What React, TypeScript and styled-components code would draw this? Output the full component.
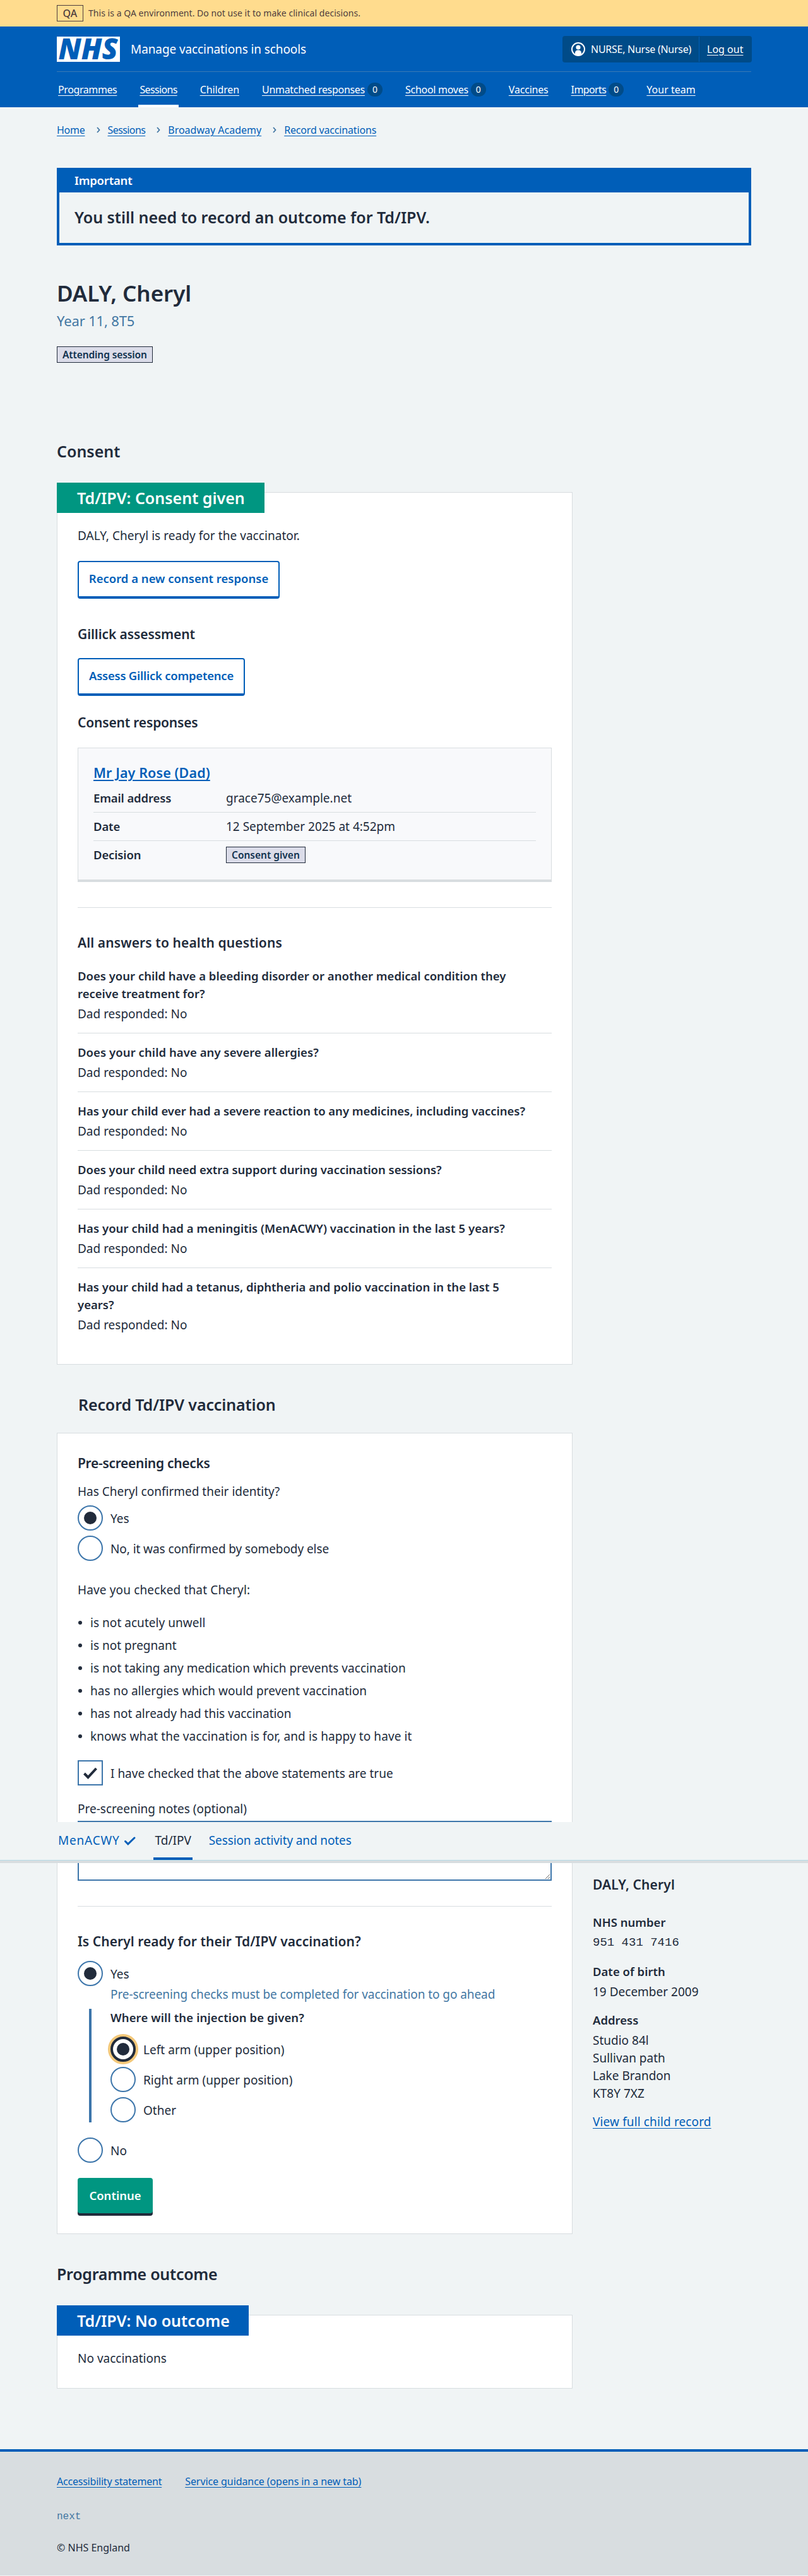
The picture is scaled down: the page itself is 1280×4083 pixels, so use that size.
import React from "react";
import styled, { createGlobalStyle, css } from "styled-components";

const c = {
  text: "#212b3b",
  blue: "#005eb8",
  darkBlue: "#004b88",
  secondary: "#4277a3",
  input: "#3d76ab",
  border: "#d8dde0",
  page: "#f0f4f5",
  green: "#009681",
  focus: "#f3c87a",
};

const GlobalStyle = createGlobalStyle`
  *, *::before, *::after { box-sizing: border-box; }
  body {
    margin: 0;
    background: ${c.page};
    color: ${c.text};
    font: 400 19px/28px "Noto Sans", "Open Sans", sans-serif;
  }
  h1, h2, h3, h4, p, ul, dl, dd, dt { margin: 0; padding: 0; }
  ul { list-style: none; }
`;

const spacing = css<{ $ls?: number }>`
  letter-spacing: ${(p) => p.$ls ?? 0}px;
`;

const Page = styled.div`
  position: relative;
`;
const Container = styled.div`
  width: 1100px;
  margin: 0 auto;
`;

/* Environment banner */
const Environment = styled.div`
  background: #ffdc8e;
  color: #4d3d3d;
  height: 42px;
`;
const EnvironmentInner = styled(Container)`
  display: flex;
  align-items: center;
  gap: 8px;
  height: 42px;
  font-size: 14px;
  line-height: 20px;
  letter-spacing: 0.04px;
`;
const EnvironmentTag = styled.strong`
  display: flex;
  align-items: center;
  justify-content: center;
  width: 42px;
  height: 26px;
  border: 1px solid #4d3d3d;
  font-size: 16px;
  font-weight: 500;
`;

/* Header */
const Header = styled.header`
  background: ${c.blue};
  color: #fff;
`;
const HeaderTop = styled.div`
  display: flex;
  align-items: center;
  height: 72px;
  border-bottom: 1px solid #3a7ab4;
`;
const LogoBox = styled.svg`
  display: block;
  width: 100px;
  height: 40px;
  overflow: visible;
`;
const ServiceName = styled.span`
  margin-left: 17px;
  letter-spacing: -0.1px;
`;
const Account = styled.div`
  display: flex;
  align-items: center;
  height: 42px;
  margin: 0 -1px 0 auto;
  background: ${c.darkBlue};
  border-radius: 4px;
  font-size: 16px;
  line-height: 24px;
`;
const AccountUser = styled.div`
  display: flex;
  align-items: center;
  gap: 9px;
  height: 40px;
  width: 217px;
  padding-left: 14px;
  letter-spacing: -0.27px;
  border-right: 1px solid ${c.blue};
`;
const LogOut = styled.a`
  width: 83px;
  padding-left: 12px;
  text-decoration: underline;
  text-underline-offset: 3px;
`;
const Nav = styled.nav`
  display: flex;
  gap: 32px;
  height: 56px;
`;
const NavItem = styled.a<{ $current?: boolean; $ls?: number }>`
  display: flex;
  align-items: center;
  gap: 4px;
  height: 56px;
  padding: 4px 2px 0;
  font-size: 16px;
  line-height: 24px;
  border-bottom: 4px solid ${(p) => (p.$current ? "#fff" : "transparent")};
  ${spacing}
`;
const NavText = styled.span`
  text-decoration: underline;
  text-underline-offset: 3px;
`;
const Count = styled.span`
  width: 24px;
  height: 22px;
  border-radius: 12px;
  background: ${c.darkBlue};
  font-size: 14px;
  line-height: 22px;
  text-align: center;
  letter-spacing: 0;
`;

const Breadcrumb = styled.nav`
  display: flex;
  align-items: center;
  padding-top: 24px;
  font-size: 16px;
  line-height: 24px;
`;
const Crumb = styled.a<{ $ls?: number }>`
  color: ${c.blue};
  text-decoration: underline;
  text-underline-offset: 3px;
  ${spacing}
`;
const Chevron = styled.svg`
  width: 6px;
  height: 10px;
  margin: 0 12px 0 18px;
`;

/* Important panel */
const Notice = styled.section`
  margin-top: 48px;
  border: 4px solid ${c.blue};
`;
const NoticeTitle = styled.h2`
  height: 35px;
  padding: 1px 24px 0;
  background: ${c.blue};
  color: #fff;
  font-size: 18.5px;
  font-weight: 600;
  line-height: 30px;
  letter-spacing: -0.2px;
`;
const NoticeBody = styled.p`
  height: 80px;
  padding: 22px 24px 0;
  font-size: 25px;
  font-weight: 600;
  line-height: 34px;
  letter-spacing: -0.04px;
`;

/* Patient heading */
const PatientName = styled.h1`
  margin-top: 54px;
  font-size: 35px;
  font-weight: 600;
  line-height: 44px;
  letter-spacing: -0.05px;
`;
const Caption = styled.p`
  margin-top: 5px;
  color: ${c.secondary};
  font-size: 22px;
  line-height: 32px;
  letter-spacing: -0.15px;
`;
const Tag = styled.strong<{ $ls?: number }>`
  display: inline-block;
  height: 26px;
  padding: 0 8px;
  border: 1px solid ${c.text};
  background: #dbdce9;
  color: #10324f;
  font-size: 15.5px;
  font-weight: 600;
  line-height: 24px;
  vertical-align: top;
  ${spacing}
`;
const TagRow = styled.div`
  height: 26px;
  margin: 25px 0 123px;
`;

/* Two-column body */
const Columns = styled.div`
  display: flex;
  gap: 32px;
`;
const Main = styled.main`
  width: 817px;
`;
const SectionTitle = styled.h2<{ $top?: number; $indent?: number; $ls?: number }>`
  margin-top: ${(p) => p.$top ?? 0}px;
  padding-left: ${(p) => p.$indent ?? 0}px;
  font-size: 25px;
  font-weight: 600;
  line-height: 34px;
  ${spacing}
`;
const Card = styled.section<{ $top: number; $bottom: number }>`
  margin-top: ${(p) => p.$top}px;
  padding: 0 32px ${(p) => p.$bottom}px;
  background: #fff;
  border: 1px solid ${c.border};
`;
const CardBanner = styled.h3<{ $tone: "green" | "blue"; $width: number; $ls?: number }>`
  width: ${(p) => p.$width}px;
  height: 48px;
  margin: -16px 0 22px -33px;
  padding: 7px 32px 0;
  background: ${(p) => (p.$tone === "green" ? c.green : c.blue)};
  color: #fff;
  font-size: 25px;
  font-weight: 600;
  line-height: 34px;
  white-space: nowrap;
  ${spacing}
`;
const SmallTitle = styled.h4<{ $top: number; $ls?: number }>`
  margin-top: ${(p) => p.$top}px;
  font-size: 21px;
  font-weight: 600;
  line-height: 32px;
  ${spacing}
`;
const Text = styled.p<{ $top?: number; $ls?: number }>`
  margin-top: ${(p) => p.$top ?? 0}px;
  ${spacing}
`;
const Button = styled.button<{ $top: number; $width: number; $primary?: boolean; $ls?: number }>`
  display: block;
  width: ${(p) => p.$width}px;
  height: 60px;
  margin: ${(p) => p.$top}px 0 0;
  padding: 0 0 2px;
  border: 2px solid ${c.blue};
  border-bottom-width: 4px;
  border-radius: 4px;
  background: #fff;
  color: ${c.blue};
  font: 600 18.5px/28px "Noto Sans", "Open Sans", sans-serif;
  white-space: nowrap;
  ${spacing}
  ${(p) =>
    p.$primary &&
    css`
      height: 56px;
      margin-bottom: 4px;
      padding: 0;
      border: 0;
      background: ${c.green};
      color: #fff;
      box-shadow: 0 4px 0 ${c.text};
    `}
`;
const Rule = styled.hr<{ $top: number }>`
  height: 1px;
  margin: ${(p) => p.$top}px 0 0;
  border: 0;
  background: ${c.border};
`;

const Response = styled.article`
  height: 213px;
  margin-top: 24px;
  padding: 23px 24px 0;
  background: #f8f9fb;
  border: 1px solid ${c.border};
  border-bottom-width: 4px;
`;
const ResponseTitle = styled.a`
  display: block;
  color: ${c.blue};
  font-size: 21.5px;
  font-weight: 600;
  line-height: 32px;
  letter-spacing: 0.1px;
  text-decoration: underline;
  text-decoration-thickness: 2px;
  text-underline-offset: 3px;
`;
const SummaryList = styled.dl`
  margin-top: 2px;
`;
const SummaryRow = styled.div`
  display: flex;
  height: 45px;
  padding-top: 8px;
  border-bottom: 1px solid ${c.border};
  &:last-child { border-bottom: 0; }
`;
const SummaryKey = styled.dt`
  width: 210px;
  font-size: 18.5px;
  font-weight: 600;
  letter-spacing: -0.13px;
`;
const SummaryValue = styled.dd`
  letter-spacing: 0;
`;
const SummaryTag = styled.div`
  padding-top: 1px;
  line-height: 26px;
`;

const Answers = styled.dl`
  margin-top: 7px;
`;
const Answer = styled.div`
  padding: 16px 0;
  border-bottom: 1px solid ${c.border};
  &:last-child { border-bottom: 0; }
`;
const Question = styled.dt<{ $ls?: number }>`
  max-width: 715px;
  font-size: 18.5px;
  font-weight: 600;
  ${spacing}
`;
const Reply = styled.dd`
  && { margin-top: 4px; }
`;

/* Form controls */
const Choice = styled.label<{ $top?: number }>`
  display: flex;
  gap: 12px;
  height: 40px;
  margin-top: ${(p) => p.$top ?? 8}px;
`;
const ChoiceText = styled.span<{ $ls?: number }>`
  padding-top: 7px;
  ${spacing}
`;
const RadioDot = styled.span<{ $checked?: boolean; $focused?: boolean }>`
  display: flex;
  align-items: center;
  justify-content: center;
  width: 40px;
  height: 40px;
  border: 2px solid ${c.input};
  border-radius: 50%;
  background: #fff;
  ${(p) =>
    p.$focused &&
    css`
      border: 4px solid ${c.text};
      box-shadow: 0 0 0 4px ${c.focus};
    `}
  &::after {
    content: "";
    width: 20px;
    height: 20px;
    border-radius: 50%;
    background: ${(p) => (p.$checked ? c.text : "transparent")};
  }
`;
const CheckBox = styled.span`
  display: flex;
  align-items: center;
  justify-content: center;
  width: 40px;
  height: 40px;
  border: 2px solid ${c.input};
`;
const Bullets = styled.ul`
  display: flex;
  flex-direction: column;
  gap: 8px;
  margin-top: 24px;
`;
const Bullet = styled.li<{ $ls?: number }>`
  display: flex;
  align-items: center;
  gap: 13px;
  ${spacing}
  &::before {
    content: "";
    width: 6px;
    height: 6px;
    margin-left: 1px;
    border-radius: 50%;
    background: ${c.text};
  }
`;
const Notes = styled.textarea`
  display: block;
  width: 751px;
  height: 95px;
  margin: 5px 0 0;
  padding: 4px;
  border: 2px solid ${c.input};
  border-radius: 0;
  background: #fff;
  resize: vertical;
`;
const Hint = styled.p`
  margin: -1px 0 0 52px;
  color: ${c.secondary};
  letter-spacing: -0.07px;
`;
const Conditional = styled.div`
  height: 180px;
  margin: 9px 0 24px 18px;
  padding-left: 30px;
  border-left: 4px solid ${c.input};
`;
const Legend = styled.p`
  font-size: 18.5px;
  font-weight: 600;
  letter-spacing: 0.12px;
`;

const StickyTabs = styled.nav`
  position: absolute;
  top: 2888px;
  left: 0;
  right: 0;
  background: ${c.page};
  border-bottom: 1px solid #b5dbe8;
  box-shadow: 0 4px 0 ${c.border};
`;
const TabList = styled(Container)`
  display: flex;
  gap: 24px;
`;
const Tab = styled.a<{ $current?: boolean; $ls?: number }>`
  display: flex;
  align-items: center;
  gap: 4px;
  height: 60px;
  padding: 2px 2px 0;
  color: ${(p) => (p.$current ? c.text : c.blue)};
  border-bottom: 4px solid ${(p) => (p.$current ? c.blue : "transparent")};
  ${spacing}
`;

/* Child summary */
const Aside = styled.aside`
  padding-top: 2273px;
`;
const AsideTitle = styled.h2`
  margin-bottom: 30px;
  font-size: 21px;
  font-weight: 600;
  line-height: 32px;
  letter-spacing: 0.15px;
`;
const AsideItem = styled.dl`
  && { margin-bottom: 17px; }
`;
const AsideKey = styled.dt`
  font-size: 18.5px;
  font-weight: 600;
`;
const AsideValue = styled.dd`
  && { margin-top: 4px; }
`;
const Mono = styled.span`
  display: block;
  height: 29px;
  font-family: "Liberation Mono", monospace;
`;

/* Footer */
const Footer = styled.footer`
  height: 200px;
  margin-top: 96px;
  background: ${c.border};
  border-top: 4px solid ${c.blue};
  font-size: 16px;
  line-height: 24px;
`;
const FooterLinks = styled.div`
  display: flex;
  gap: 37px;
  padding-top: 35px;
`;
const Version = styled.p`
  margin-top: 32px;
  color: ${c.secondary};
  font-family: "Liberation Mono", monospace;
`;
const Copyright = styled.p`
  margin-top: 25px;
`;

const NhsLogo = () => (
  <LogoBox viewBox="0 0 100 40">
    <rect width="100" height="40" fill="#fff" />
    <text
      x="2.5"
      y="36.3"
      textLength="94"
      lengthAdjust="spacingAndGlyphs"
      fill={c.blue}
      fontFamily="Noto Sans, Open Sans, sans-serif"
      fontSize="46"
      fontStyle="italic"
      fontWeight="900"
    >
      NHS
    </text>
  </LogoBox>
);

const UserIcon = () => (
  <svg width="22" height="22" viewBox="0 0 22 22">
    <circle cx="11" cy="11" r="10" fill="none" stroke="#fff" strokeWidth="2" />
    <circle cx="11" cy="8" r="3.6" fill="#fff" />
    <path d="M6 20v-3.2a4.2 4.2 0 0 1 4.2-4.2h1.6a4.2 4.2 0 0 1 4.2 4.2V20a10 10 0 0 1-10 0z" fill="#fff" />
  </svg>
);

const BreadcrumbChevron = () => (
  <Chevron viewBox="0 0 6 10">
    <path d="M1 1l3.5 4L1 9" fill="none" stroke={c.secondary} strokeWidth="1.8" />
  </Chevron>
);

const nav = [
  { label: "Programmes", ls: -0.4 },
  { label: "Sessions", current: true, ls: -0.65 },
  { label: "Children", ls: -0.12 },
  { label: "Unmatched responses", count: 0, ls: -0.3 },
  { label: "School moves", count: 0, ls: -0.27 },
  { label: "Vaccines", ls: -0.2 },
  { label: "Imports", count: 0, ls: -0.6 },
  { label: "Your team", ls: 0 },
];

const crumbs = [
  { label: "Home", ls: -0.25 },
  { label: "Sessions", ls: -0.6 },
  { label: "Broadway Academy", ls: 0 },
  { label: "Record vaccinations", ls: -0.17 },
];

const questions = [
  { q: "Does your child have a bleeding disorder or another medical condition they receive treatment for?", ls: 0 },
  { q: "Does your child have any severe allergies?", ls: 0.07 },
  { q: "Has your child ever had a severe reaction to any medicines, including vaccines?", ls: -0.03 },
  { q: "Does your child need extra support during vaccination sessions?", ls: -0.03 },
  { q: "Has your child had a meningitis (MenACWY) vaccination in the last 5 years?", ls: 0.05 },
  { q: "Has your child had a tetanus, diphtheria and polio vaccination in the last 5 years?", ls: 0 },
];

const checks = [
  { label: "is not acutely unwell", ls: 0.04 },
  { label: "is not pregnant", ls: 0 },
  { label: "is not taking any medication which prevents vaccination", ls: 0.04 },
  { label: "has no allergies which would prevent vaccination", ls: 0.04 },
  { label: "has not already had this vaccination", ls: -0.03 },
  { label: "knows what the vaccination is for, and is happy to have it", ls: 0.1 },
];

export default function App() {
  return (
    <Page>
      <GlobalStyle />
      <Environment>
        <EnvironmentInner>
          <EnvironmentTag>QA</EnvironmentTag>
          <span>This is a QA environment. Do not use it to make clinical decisions.</span>
        </EnvironmentInner>
      </Environment>
      <Header>
        <Container>
          <HeaderTop>
            <NhsLogo />
            <ServiceName>Manage vaccinations in schools</ServiceName>
            <Account>
              <AccountUser>
                <UserIcon />
                NURSE, Nurse (Nurse)
              </AccountUser>
              <LogOut>Log out</LogOut>
            </Account>
          </HeaderTop>
          <Nav>
            {nav.map((n) => (
              <NavItem key={n.label} $current={n.current} $ls={n.ls}>
                <NavText>{n.label}</NavText>
                {n.count !== undefined && <Count>{n.count}</Count>}
              </NavItem>
            ))}
          </Nav>
        </Container>
      </Header>

      <Container>
        <Breadcrumb>
          {crumbs.map((b, i) => (
            <React.Fragment key={b.label}>
              {i > 0 && <BreadcrumbChevron />}
              <Crumb $ls={b.ls}>{b.label}</Crumb>
            </React.Fragment>
          ))}
        </Breadcrumb>

        <Notice>
          <NoticeTitle>Important</NoticeTitle>
          <NoticeBody>You still need to record an outcome for Td/IPV.</NoticeBody>
        </Notice>

        <PatientName>DALY, Cheryl</PatientName>
        <Caption>Year 11, 8T5</Caption>
        <TagRow>
          <Tag $ls={-0.1}>Attending session</Tag>
        </TagRow>

        <Columns>
          <Main>
            <SectionTitle>Consent</SectionTitle>
            <Card $top={48} $bottom={32}>
              <CardBanner $tone="green" $width={329}>Td/IPV: Consent given</CardBanner>
              <Text $ls={0.05}>DALY, Cheryl is ready for the vaccinator.</Text>
              <Button $top={26} $width={320}>Record a new consent response</Button>
              <SmallTitle $top={40} $ls={-0.1}>Gillick assessment</SmallTitle>
              <Button $top={22} $width={265} $ls={-0.24}>Assess Gillick competence</Button>
              <SmallTitle $top={26} $ls={-0.18}>Consent responses</SmallTitle>
              <Response>
                <ResponseTitle>Mr Jay Rose (Dad)</ResponseTitle>
                <SummaryList>
                  <SummaryRow>
                    <SummaryKey>Email address</SummaryKey>
                    <SummaryValue>grace75@example.net</SummaryValue>
                  </SummaryRow>
                  <SummaryRow>
                    <SummaryKey>Date</SummaryKey>
                    <SummaryValue>12 September 2025 at 4:52pm</SummaryValue>
                  </SummaryRow>
                  <SummaryRow>
                    <SummaryKey>Decision</SummaryKey>
                    <SummaryValue>
                      <SummaryTag>
                        <Tag>Consent given</Tag>
                      </SummaryTag>
                    </SummaryValue>
                  </SummaryRow>
                </SummaryList>
              </Response>
              <Rule $top={40} />
              <SmallTitle $top={39} $ls={0.1}>All answers to health questions</SmallTitle>
              <Answers>
                {questions.map((a) => (
                  <Answer key={a.q}>
                    <Question $ls={a.ls}>{a.q}</Question>
                    <Reply>Dad responded: No</Reply>
                  </Answer>
                ))}
              </Answers>
            </Card>

            <SectionTitle $top={46} $indent={34} $ls={-0.13}>Record Td/IPV vaccination</SectionTitle>
            <Card $top={28} $bottom={28}>
              <SmallTitle $top={31} $ls={-0.3}>Pre-screening checks</SmallTitle>
              <Text $top={15}>Has Cheryl confirmed their identity?</Text>
              <Choice $top={8}>
                <RadioDot $checked />
                <ChoiceText>Yes</ChoiceText>
              </Choice>
              <Choice>
                <RadioDot />
                <ChoiceText $ls={-0.08}>No, it was confirmed by somebody else</ChoiceText>
              </Choice>
              <Text $top={32} $ls={0.14}>Have you checked that Cheryl:</Text>
              <Bullets>
                {checks.map((b) => (
                  <Bullet key={b.label} $ls={b.ls}>{b.label}</Bullet>
                ))}
              </Bullets>
              <Choice $top={24}>
                <CheckBox>
                  <svg width="24" height="20" viewBox="0 0 24 20">
                    <path d="M2.5 11l6 6L21.5 3" fill="none" stroke={c.text} strokeWidth="4" />
                  </svg>
                </CheckBox>
                <ChoiceText>I have checked that the above statements are true</ChoiceText>
              </Choice>
              <Text $top={23}>Pre-screening notes (optional)</Text>
              <Notes />
              <Rule $top={40} />
              <SmallTitle $top={39} $ls={0.05}>Is Cheryl ready for their Td/IPV vaccination?</SmallTitle>
              <Choice $top={15}>
                <RadioDot $checked />
                <ChoiceText>Yes</ChoiceText>
              </Choice>
              <Hint>Pre-screening checks must be completed for vaccination to go ahead</Hint>
              <Conditional>
                <Legend>Where will the injection be given?</Legend>
                <Choice $top={16}>
                  <RadioDot $checked $focused />
                  <ChoiceText $ls={0.04}>Left arm (upper position)</ChoiceText>
                </Choice>
                <Choice>
                  <RadioDot />
                  <ChoiceText $ls={0.04}>Right arm (upper position)</ChoiceText>
                </Choice>
                <Choice>
                  <RadioDot />
                  <ChoiceText>Other</ChoiceText>
                </Choice>
              </Conditional>
              <Choice $top={0}>
                <RadioDot />
                <ChoiceText>No</ChoiceText>
              </Choice>
              <Button $top={24} $width={119} $primary>Continue</Button>
            </Card>

            <SectionTitle $top={46} $ls={-0.27}>Programme outcome</SectionTitle>
            <Card $top={48} $bottom={33}>
              <CardBanner $tone="blue" $width={304}>Td/IPV: No outcome</CardBanner>
              <Text>No vaccinations</Text>
            </Card>
          </Main>

          <Aside>
            <AsideTitle>DALY, Cheryl</AsideTitle>
            <AsideItem>
              <AsideKey>NHS number</AsideKey>
              <AsideValue>
                <Mono>951 431 7416</Mono>
              </AsideValue>
            </AsideItem>
            <AsideItem>
              <AsideKey>Date of birth</AsideKey>
              <AsideValue>19 December 2009</AsideValue>
            </AsideItem>
            <AsideItem>
              <AsideKey>Address</AsideKey>
              <AsideValue>
                Studio 84l
                <br />
                Sullivan path
                <br />
                Lake Brandon
                <br />
                KT8Y 7XZ
              </AsideValue>
            </AsideItem>
            <Crumb $ls={0.13}>View full child record</Crumb>
          </Aside>
        </Columns>
      </Container>

      <Footer>
        <Container>
          <FooterLinks>
            <Crumb $ls={-0.22}>Accessibility statement</Crumb>
            <Crumb $ls={-0.08}>Service guidance (opens in a new tab)</Crumb>
          </FooterLinks>
          <Version>next</Version>
          <Copyright>© NHS England</Copyright>
        </Container>
      </Footer>

      <StickyTabs>
        <TabList>
          <Tab $ls={0.8}>
            MenACWY
            <svg width="24" height="24" viewBox="0 0 24 24">
              <path d="M5.5 13.5l4.3 4.3L20 8" fill="none" stroke={c.blue} strokeWidth="3" strokeLinecap="round" />
            </svg>
          </Tab>
          <Tab $current>Td/IPV</Tab>
          <Tab $ls={-0.12}>Session activity and notes</Tab>
        </TabList>
      </StickyTabs>
    </Page>
  );
}
